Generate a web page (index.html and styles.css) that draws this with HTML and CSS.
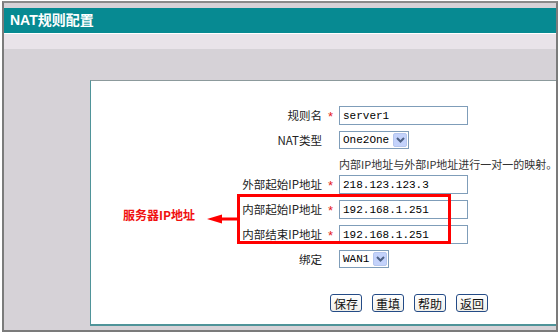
FILE: index.html
```html
<!DOCTYPE html>
<html lang="zh-CN">
<head>
  <meta charset="UTF-8">
  <title>NAT规则配置</title>
  <link rel="stylesheet" href="styles.css">
</head>
<body>
  <div class="frame">
    <div class="title-bar">NAT规则配置</div>
    <div class="band"></div>
    <div class="panel">
      <div class="row">
        <label class="label">规则名</label>
        <span class="star">*</span>
        <input class="text" type="text" value="server1">
      </div>
      <div class="row">
        <label class="label">NAT类型</label>
        <span class="star"></span>
        <div class="select select-wide">
          <span class="value">One2One</span>
          <span class="drop"><svg width="9" height="6" viewBox="0 0 9 6"><path d="M1 1 L4.5 4.5 L8 1" fill="none" stroke="#4d6185" stroke-width="2"/></svg></span>
        </div>
      </div>
      <div class="row row-hint">
        <span class="label"></span>
        <span class="star"></span>
        <span class="hint">内部IP地址与外部IP地址进行一对一的映射。</span>
      </div>
      <div class="row">
        <label class="label">外部起始IP地址</label>
        <span class="star">*</span>
        <input class="text" type="text" value="218.123.123.3">
      </div>
      <div class="row">
        <label class="label">内部起始IP地址</label>
        <span class="star">*</span>
        <input class="text" type="text" value="192.168.1.251">
      </div>
      <div class="row">
        <label class="label">内部结束IP地址</label>
        <span class="star">*</span>
        <input class="text" type="text" value="192.168.1.251">
      </div>
      <div class="row">
        <label class="label">绑定</label>
        <span class="star"></span>
        <div class="select">
          <span class="value">WAN1</span>
          <span class="drop"><svg width="9" height="6" viewBox="0 0 9 6"><path d="M1 1 L4.5 4.5 L8 1" fill="none" stroke="#4d6185" stroke-width="2"/></svg></span>
        </div>
      </div>
      <div class="actions">
        <button class="btn">保存</button>
        <button class="btn">重填</button>
        <button class="btn">帮助</button>
        <button class="btn">返回</button>
      </div>

      <!-- annotation over the form -->
      <div class="mark-box"></div>
      <div class="mark-note">服务器IP地址</div>
      <svg class="mark-arrow" width="30" height="12" viewBox="0 0 30 12">
        <path d="M0 6 L15 1.5 L15 10.5 Z" fill="#f00"/>
        <rect x="14" y="4.5" width="16" height="3" fill="#f00"/>
      </svg>
    </div>
  </div>
</body>
</html>
```

FILE: styles.css
```css
* { box-sizing: border-box; }
body {
  margin: 0;
  background: #fff;
  font-family: "Noto Sans CJK SC", "Liberation Sans", sans-serif;
  font-size: 12px;
  color: #000;
}
.frame {
  margin: 1px 2px 0;
  height: 331px;
  border: 2px solid #7b7b7b;
  background: #d6d2d7;
  padding-top: 5px;
  border-top-color: #8a8a8a;
}
.title-bar {
  height: 26px;
  line-height: 25px;
  padding-left: 6px;
  background: #078a92;
  color: #fff;
  font-family: "Liberation Sans", "Noto Sans CJK SC", sans-serif;
  font-size: 14px;
  font-weight: bold;
  border-bottom: 1px solid #fff;
}
.band {
  height: 15px;
  background: #e9e3e9;
}
.panel {
  position: relative;
  margin: 31px 0 0 86px;
  height: 246px;
  background: #fff;
  border-top: 1px solid #8c9a9c;
  border-left: 1px solid #4f9499;
  border-bottom: 2px solid #4f9499;
  padding-top: 25px;
}
.row {
  display: flex;
  align-items: flex-start;
  height: 25px;
}
.row-hint {
  height: 19px;
}
.label {
  flex: none;
  width: 231px;
  text-align: right;
  font-size: 11.5px;
  line-height: 19px;
  color: #222;
}
.star {
  flex: none;
  width: 17px;
  text-align: center;
  line-height: 21px;
  color: #e52020;
  font-family: "Liberation Sans", sans-serif;
  font-size: 13px;
}
.text {
  width: 129px;
  height: 19px;
  margin: 0;
  padding: 0 3px;
  border: 1px solid #7f9db9;
  font-family: "Liberation Mono", monospace;
  font-size: 11px;
  color: #000;
}
.hint {
  white-space: nowrap;
  font-size: 11px;
  line-height: 15px;
  padding-top: 1px;
  color: #333;
}
.select {
  display: flex;
  align-items: center;
  width: 50px;
  height: 18px;
  border: 1px solid #7f9db9;
  padding: 1px;
}
.select-wide {
  width: 70px;
}
.select .value {
  flex: 1;
  padding-left: 2px;
  font-family: "Liberation Mono", monospace;
  font-size: 11px;
  line-height: 14px;
}
.select .drop {
  display: flex;
  align-items: center;
  justify-content: center;
  width: 14px;
  height: 14px;
  background: #c3d2fb;
  border: 1px solid #b5c6ee;
  border-radius: 2px;
}
.actions {
  display: flex;
  gap: 10px;
  margin: 19px 0 0 239px;
}
.btn {
  width: 32px;
  height: 18px;
  padding: 0;
  border: 1px solid #244b86;
  border-radius: 3px;
  background: linear-gradient(#fff, #f0efe9);
  font-family: "Noto Sans CJK SC", sans-serif;
  font-size: 12px;
  line-height: 15px;
  color: #111;
}
.mark-box {
  position: absolute;
  left: 146px;
  top: 113px;
  width: 214px;
  height: 50px;
  border: 3px solid #f00;
}
.mark-note {
  position: absolute;
  left: 32px;
  top: 126px;
  line-height: 16px;
  color: #f01010;
  font-family: "Noto Sans CJK SC", serif;
  font-weight: bold;
}
.mark-arrow {
  position: absolute;
  left: 116px;
  top: 132px;
}
```
